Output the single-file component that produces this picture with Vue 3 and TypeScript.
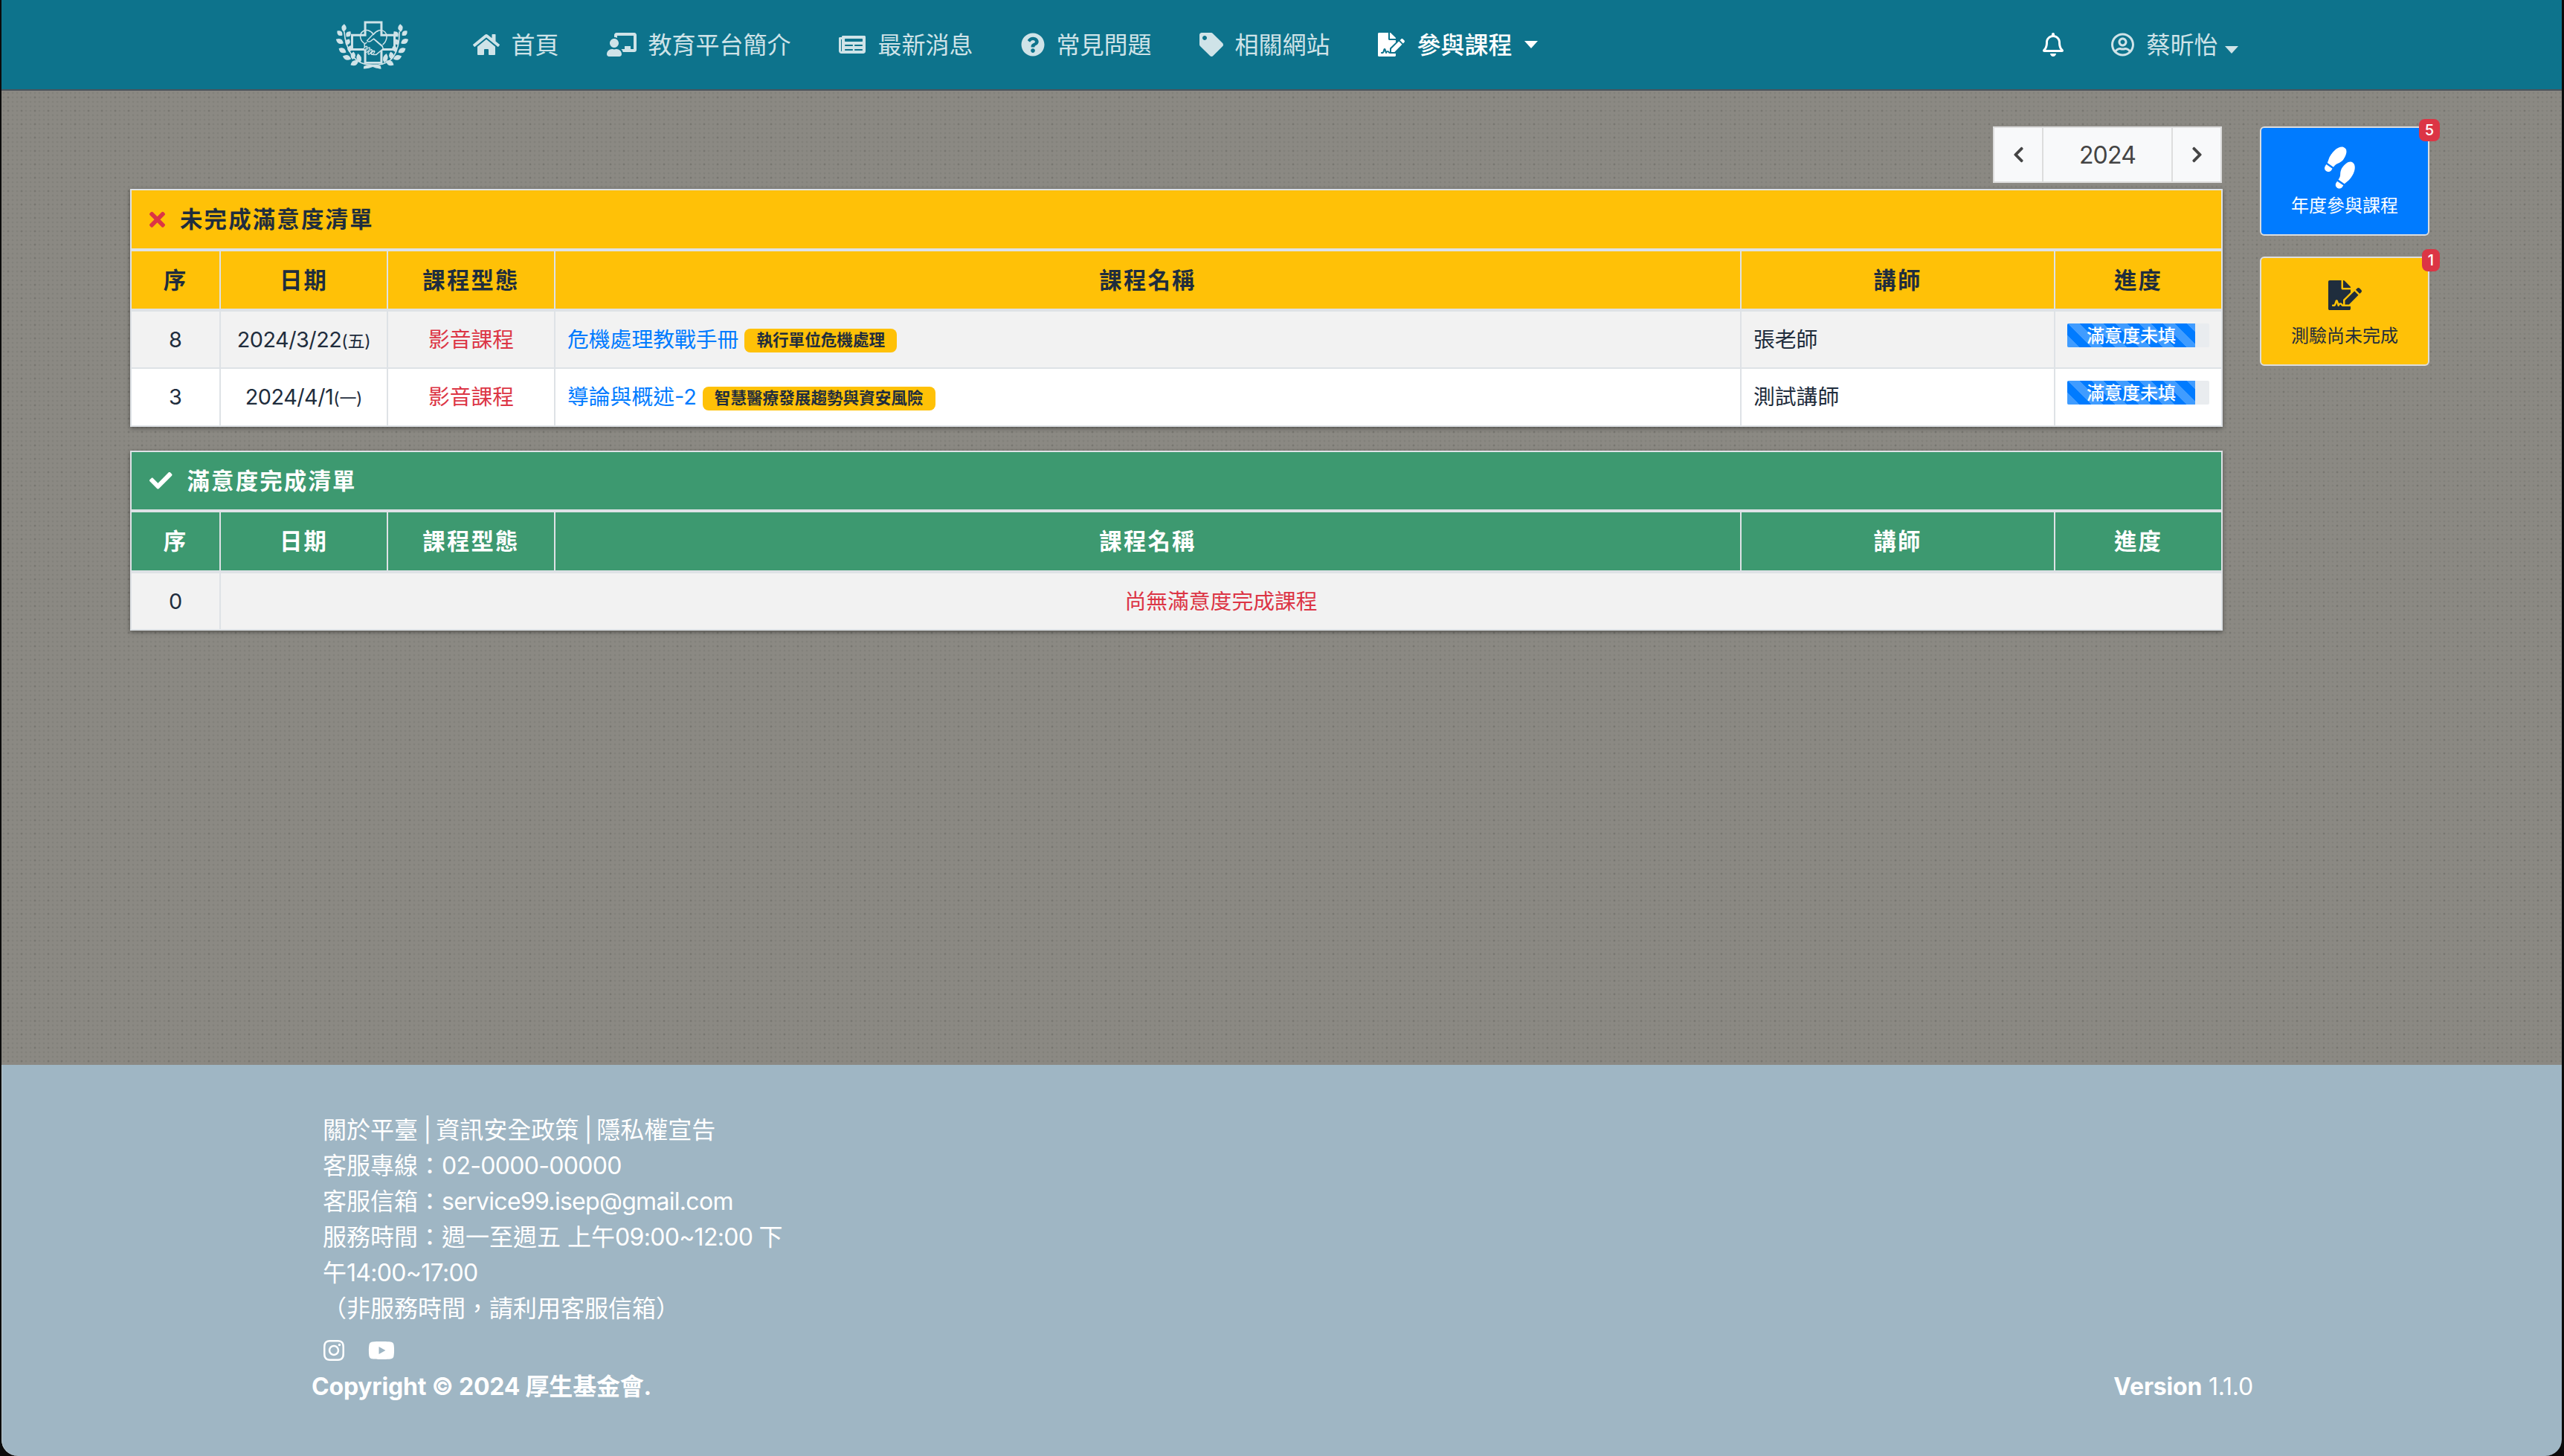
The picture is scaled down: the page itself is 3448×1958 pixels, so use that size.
<script setup lang="ts">
interface Icon { w: number; d: string }
interface NavItem { key: string; icon: Icon; label: string; gap: number; next: number; active?: boolean }
interface Course { no: number; date: string; day: string; kind: string; title: string; tag: string; teacher: string; status: string; percent: number }

const icons: Record<string, Icon> = {
  home: { w: 576, d: 'M280.37 148.26L96 300.11V464a16 16 0 0 0 16 16l112.06-.29a16 16 0 0 0 15.92-16V368a16 16 0 0 1 16-16h64a16 16 0 0 1 16 16v95.64a16 16 0 0 0 16 16.05L464 480a16 16 0 0 0 16-16V300L295.67 148.26a12.19 12.19 0 0 0-15.3 0zM571.6 251.47L488 182.56V44.05a12 12 0 0 0-12-12h-56a12 12 0 0 0-12 12v72.61L318.47 43a48 48 0 0 0-61 0L4.34 251.47a12 12 0 0 0-1.6 16.9l25.5 31A12 12 0 0 0 45.15 301l235.22-193.74a12.19 12.19 0 0 1 15.3 0L530.9 301a12 12 0 0 0 16.9-1.6l25.5-31a12 12 0 0 0-1.7-16.93z' },
  teacher: { w: 640, d: 'M208 352c-2.39 0-4.78.35-7.06 1.09C187.98 357.3 174.35 360 160 360c-14.35 0-27.98-2.7-40.95-6.91-2.28-.74-4.66-1.09-7.05-1.09C49.94 352-.33 402.48 0 464.62.14 490.88 21.73 512 48 512h224c26.27 0 47.86-21.12 48-47.38.33-62.14-49.94-112.62-112-112.62zm-48-32c53.02 0 96-42.98 96-96s-42.98-96-96-96-96 42.98-96 96 42.98 96 96 96zM592 0H208c-26.47 0-48 22.25-48 49.59V96c23.42 0 45.1 6.78 64 17.8V64h352v288h-64v-64H384v64h-76.24c19.1 16.69 33.12 38.73 39.69 64H592c26.47 0 48-22.25 48-49.59V49.59C640 22.25 618.47 0 592 0z' },
  news: { w: 576, d: 'M552 64H88c-13.255 0-24 10.745-24 24v8H24c-13.255 0-24 10.745-24 24v272c0 30.928 25.072 56 56 56h472c26.51 0 48-21.49 48-48V88c0-13.255-10.745-24-24-24zM56 400a8 8 0 0 1-8-8V144h16v248a8 8 0 0 1-8 8zm236-16H140c-6.627 0-12-5.373-12-12v-8c0-6.627 5.373-12 12-12h152c6.627 0 12 5.373 12 12v8c0 6.627-5.373 12-12 12zm208 0H348c-6.627 0-12-5.373-12-12v-8c0-6.627 5.373-12 12-12h152c6.627 0 12 5.373 12 12v8c0 6.627-5.373 12-12 12zm-208-96H140c-6.627 0-12-5.373-12-12v-8c0-6.627 5.373-12 12-12h152c6.627 0 12 5.373 12 12v8c0 6.627-5.373 12-12 12zm208 0H348c-6.627 0-12-5.373-12-12v-8c0-6.627 5.373-12 12-12h152c6.627 0 12 5.373 12 12v8c0 6.627-5.373 12-12 12zm0-96H140c-6.627 0-12-5.373-12-12v-40c0-6.627 5.373-12 12-12h360c6.627 0 12 5.373 12 12v40c0 6.627-5.373 12-12 12z' },
  question: { w: 512, d: 'M504 256c0 136.997-111.043 248-248 248S8 392.997 8 256C8 119.083 119.043 8 256 8s248 111.083 248 248zM262.655 90c-54.497 0-89.255 22.957-116.549 63.758-3.536 5.286-2.353 12.415 2.715 16.258l34.699 26.31c5.205 3.947 12.621 3.008 16.665-2.122 17.864-22.658 30.113-35.797 57.303-35.797 20.429 0 45.698 13.148 45.698 32.958 0 14.976-12.363 22.667-32.534 33.976C247.128 238.528 216 254.941 216 296v4c0 6.627 5.373 12 12 12h56c6.627 0 12-5.373 12-12v-1.333c0-28.462 83.186-29.647 83.186-106.667 0-58.002-60.165-102-116.531-102zM256 338c-25.365 0-46 20.635-46 46 0 25.364 20.635 46 46 46s46-20.636 46-46c0-25.365-20.635-46-46-46z' },
  tag: { w: 512, d: 'M0 252.118V48C0 21.49 21.49 0 48 0h204.118a48 48 0 0 1 33.941 14.059l211.882 211.882c18.745 18.745 18.745 49.137 0 67.882L293.823 497.941c-18.745 18.745-49.137 18.745-67.882 0L14.059 286.059A48 48 0 0 1 0 252.118zM112 64c-26.51 0-48 21.49-48 48s21.49 48 48 48 48-21.49 48-48-21.49-48-48-48z' },
  sign: { w: 576, d: 'M218.17 424.14c-2.95-5.92-8.09-6.52-10.17-6.52s-7.22.59-10.02 6.19l-7.67 15.34c-6.37 12.78-25.03 11.37-29.48-2.09L144 386.59l-10.61 31.88c-5.89 17.66-22.38 29.53-41 29.53H80c-8.84 0-16-7.16-16-16s7.16-16 16-16h12.39c4.83 0 9.11-3.08 10.64-7.66l18.19-54.64c3.3-9.81 12.44-16.41 22.78-16.41s19.48 6.59 22.77 16.41l13.88 41.64c19.75-16.19 54.06-9.7 66 14.16 1.89 3.78 5.49 5.95 9.36 6.26v-82.12l128-127.09V160H248c-13.2 0-24-10.8-24-24V0H24C10.7 0 0 10.7 0 24v464c0 13.3 10.7 24 24 24h336c13.3 0 24-10.7 24-24v-40l-128-.11c-16.12-.31-30.58-9.28-37.83-23.75zM384 121.9c0-6.3-2.5-12.4-7-16.9L279.1 7c-4.5-4.5-10.6-7-17-7H256v128h128v-6.1zm-96 225.06V416h68.99l161.68-162.78-67.88-67.88L288 346.96zm280.54-179.63l-31.87-31.87c-9.94-9.94-26.07-9.94-36.01 0l-27.25 27.25 67.88 67.88 27.25-27.25c9.95-9.94 9.95-26.07 0-36.01z' },
  bell: { w: 448, d: 'M439.39 362.29c-19.32-20.76-55.47-51.99-55.47-154.29 0-77.7-54.48-139.9-127.94-155.16V32c0-17.67-14.32-32-31.98-32s-31.98 14.33-31.98 32v20.84C118.56 68.1 64.08 130.3 64.08 208c0 102.3-36.15 133.53-55.47 154.29-6 6.45-8.66 14.16-8.61 21.71.11 16.4 12.98 32 32.1 32h383.8c19.12 0 32-15.6 32.1-32 .05-7.55-2.61-15.27-8.61-21.71zM67.53 368c21.22-27.97 44.42-74.33 44.53-159.42 0-.2-.06-.38-.06-.58 0-61.86 50.14-112 112-112s112 50.14 112 112c0 .2-.06.38-.06.58.11 85.1 23.31 131.46 44.53 159.42H67.53zM224 512c35.32 0 63.97-28.65 63.97-64H160.03c0 35.35 28.65 64 63.97 64z' },
  user: { w: 496, d: 'M248 104c-53 0-96 43-96 96s43 96 96 96 96-43 96-96-43-96-96-96zm0 144c-26.5 0-48-21.5-48-48s21.5-48 48-48 48 21.5 48 48-21.5 48-48 48zm0-240C111 8 0 119 0 256s111 248 248 248 248-111 248-248S385 8 248 8zm0 448c-49.7 0-95.1-18.3-130.1-48.4 14.9-23 40.4-38.6 69.6-39.5 20.8 6.4 40.6 9.6 60.5 9.6s39.7-3.1 60.5-9.6c29.2 1 54.7 16.5 69.6 39.5-35 30.1-80.4 48.4-130.1 48.4zm162.7-84.1c-24.4-31.4-62.1-51.9-105.1-51.9-10.2 0-26 9.6-57.6 9.6-31.5 0-47.4-9.6-57.6-9.6-42.9 0-80.6 20.5-105.1 51.9C61.9 339.2 48 299.2 48 256c0-110.3 89.7-200 200-200s200 89.7 200 200c0 43.2-13.9 83.2-37.3 115.9z' },
  times: { w: 352, d: 'M242.72 256l100.07-100.07c12.28-12.28 12.28-32.19 0-44.48l-22.24-22.24c-12.28-12.28-32.19-12.28-44.48 0L176 189.28 75.93 89.21c-12.28-12.28-32.19-12.28-44.48 0L9.21 111.45c-12.28 12.28-12.28 32.19 0 44.48L109.28 256 9.21 356.07c-12.28 12.28-12.28 32.19 0 44.48l22.24 22.24c12.28 12.28 32.2 12.28 44.48 0L176 322.72l100.07 100.07c12.28 12.28 32.2 12.28 44.48 0l22.24-22.24c12.28-12.28 12.28-32.19 0-44.48L242.72 256z' },
  check: { w: 512, d: 'M173.898 439.404l-166.4-166.4c-9.997-9.997-9.997-26.206 0-36.204l36.203-36.204c9.997-9.998 26.207-9.998 36.204 0L192 312.69 432.095 72.596c9.997-9.997 26.207-9.997 36.204 0l36.203 36.204c9.997 9.997 9.997 26.206 0 36.204l-294.4 294.401c-9.998 9.997-26.207 9.997-36.204-.001z' },
  left: { w: 320, d: 'M34.52 239.03L228.87 44.69c9.37-9.37 24.57-9.37 33.94 0l22.67 22.67c9.36 9.36 9.37 24.52.04 33.9L131.49 256l154.02 154.75c9.34 9.38 9.32 24.54-.04 33.9l-22.67 22.67c-9.37 9.37-24.57 9.37-33.94 0L34.52 272.97c-9.37-9.37-9.37-24.57 0-33.94z' },
  shoe: { w: 640, d: 'M192 160h32V32h-32c-35.35 0-64 28.65-64 64s28.65 64 64 64zM0 416c0 35.35 28.65 64 64 64h32V352H64c-35.35 0-64 28.65-64 64zm337.46-128c-34.91 0-76.16 13.12-104.73 32-24.79 16.38-44.52 32-104.73 32v128l57.53 15.97c26.21 7.28 53.01 13.12 80.31 15.05 32.69 2.31 65.6.67 97.58-6.2C472.9 481.3 512 429.22 512 384c0-64-84.18-96-174.54-96zM491.42 7.25C459.44.38 426.53-1.26 393.84 1.05c-27.3 1.93-54.1 7.77-80.31 15.04L256 32v128c60.2 0 79.94 15.62 104.73 32 28.57 18.88 69.82 32 104.73 32C555.82 224 640 192 640 128c0-45.22-39.1-97.3-148.58-120.75z' },
  instagram: { w: 448, d: 'M224.1 141c-63.6 0-114.9 51.3-114.9 114.9s51.3 114.9 114.9 114.9S339 319.5 339 255.9 287.7 141 224.1 141zm0 189.6c-41.1 0-74.7-33.5-74.7-74.7s33.5-74.7 74.7-74.7 74.7 33.5 74.7 74.7-33.6 74.7-74.7 74.7zm146.4-194.3c0 14.9-12 26.8-26.8 26.8-14.9 0-26.8-12-26.8-26.8s12-26.8 26.8-26.8 26.8 12 26.8 26.8zm76.1 27.2c-1.7-35.9-9.9-67.7-36.2-93.9-26.2-26.2-58-34.4-93.9-36.2-37-2.1-147.9-2.1-184.9 0-35.8 1.7-67.6 9.9-93.9 36.1s-34.4 58-36.2 93.9c-2.1 37-2.1 147.9 0 184.9 1.7 35.9 9.9 67.7 36.2 93.9s58 34.4 93.9 36.2c37 2.1 147.9 2.1 184.9 0 35.9-1.7 67.7-9.9 93.9-36.2 26.2-26.2 34.4-58 36.2-93.9 2.1-37 2.1-147.8 0-184.8zM398.8 388c-7.8 19.6-22.9 34.7-42.6 42.6-29.5 11.7-99.5 9-132.1 9s-102.7 2.6-132.1-9c-19.6-7.8-34.7-22.9-42.6-42.6-11.7-29.5-9-99.5-9-132.1s-2.6-102.7 9-132.1c7.8-19.6 22.9-34.7 42.6-42.6 29.5-11.7 99.5-9 132.1-9s102.7-2.6 132.1 9c19.6 7.8 34.7 22.9 42.6 42.6 11.7 29.5 9 99.5 9 132.1s2.7 102.7-9 132.1z' },
  youtube: { w: 576, d: 'M549.655 124.083c-6.281-23.65-24.787-42.276-48.284-48.597C458.781 64 288 64 288 64S117.22 64 74.629 75.486c-23.497 6.322-42.003 24.947-48.284 48.597-11.412 42.867-11.412 132.305-11.412 132.305s0 89.438 11.412 132.305c6.281 23.65 24.787 41.5 48.284 47.821C117.22 448 288 448 288 448s170.78 0 213.371-11.486c23.497-6.321 42.003-24.171 48.284-47.821 11.412-42.867 11.412-132.305 11.412-132.305s0-89.438-11.412-132.305zm-317.51 213.508V175.185l142.739 81.205-142.739 81.201z' },
}

const nav: NavItem[] = [
  { key: 'home', icon: icons.home, label: '首頁', gap: 14, next: 64 },
  { key: 'about', icon: icons.teacher, label: '教育平台簡介', gap: 16, next: 62 },
  { key: 'news', icon: icons.news, label: '最新消息', gap: 15, next: 60 },
  { key: 'faq', icon: icons.question, label: '常見問題', gap: 12, next: 60 },
  { key: 'links', icon: icons.tag, label: '相關網站', gap: 12, next: 62 },
  { key: 'courses', icon: icons.sign, label: '參與課程', gap: 15, next: 0, active: true },
]

const heads: string[] = ['序', '日期', '課程型態', '課程名稱', '講師', '進度']

const pending: Course[] = [
  { no: 8, date: '2024/3/22', day: '(五)', kind: '影音課程', title: '危機處理教戰手冊', tag: '執行單位危機處理', teacher: '張老師', status: '滿意度未填', percent: 90 },
  { no: 3, date: '2024/4/1', day: '(一)', kind: '影音課程', title: '導論與概述-2', tag: '智慧醫療發展趨勢與資安風險', teacher: '測試講師', status: '滿意度未填', percent: 90 },
]

// One side of the laurel wreath: x, y, rotation, half length
const leaves: number[][] = [
  [67, 68, 4, 16], [50, 89, -48, 14], [85, 93, 38, 14],
  [50, 122, -62, 17], [82, 125, 30, 14], [61, 159, -62, 17], [91, 152, 14, 14],
  [79, 188, -72, 18], [104, 180, 8, 16], [110, 210, -118, 18], [128, 190, -14, 19],
]
</script>

<template>
  <div class="screen">
    <div class="window">
      <header class="navbar">
        <svg class="logo" viewBox="36 36 294 202">
          <g fill="none" stroke="currentColor">
            <path stroke-width="9" d="M153 45H219V97H272V155H219V209H153V155H100V97H153Z" />
            <g stroke-width="4.5">
              <path d="M152 132C133 122 127 95 142 83C155 72 173 76 187 94C200 76 221 72 233 84C246 97 241 122 224 136" />
              <path fill="#0d738c" d="M187 92L161 119C165 126 174 125 181 117L188 112L222 140L226 152L198 176L186 176L152 158L150 134L160 126" />
              <path d="M188 113L222 143" />
            </g>
            <path stroke-width="11" stroke-linecap="round" d="M158 146L150 153M169 151L158 163M178 159L168 171M188 164L181 172" />
            <path stroke="#0d738c" stroke-width="4" stroke-linecap="round" d="M157 147L151 152M168 152L159 162M177 160L169 170M187 166L182 171" />
            <path stroke-width="5" d="M187 218C225 219 252 207 268 184C284 160 292 118 292 82M187 218C149 219 122 207 104 184C84 160 70 118 68 82" />
          </g>
          <g fill="currentColor">
            <path v-for="(l, i) in leaves" :key="'l' + i" :transform="`translate(${l[0]} ${l[1]}) rotate(${l[2]})`" :d="`M0 ${-l[3]}Q20 0 0 ${l[3]}Q-20 0 0 ${-l[3]}Z`" />
            <g transform="translate(363 0) scale(-1 1)">
              <path v-for="(l, i) in leaves" :key="'r' + i" :transform="`translate(${l[0]} ${l[1]}) rotate(${l[2]})`" :d="`M0 ${-l[3]}Q20 0 0 ${l[3]}Q-20 0 0 ${-l[3]}Z`" />
            </g>
            <path d="M148 222Q168 216 187 220Q206 216 216 222L218 234Q198 232 184 226Q166 234 146 233Z" />
          </g>
        </svg>
        <nav class="menu">
          <a v-for="n in nav" :key="n.key" class="item" :class="{ active: n.active }" :style="{ marginRight: n.next + 'px' }">
            <span class="fw" :style="{ marginRight: n.gap + 'px' }"><svg :viewBox="`0 0 ${n.icon.w} 512`" :width="n.icon.w / 16" height="32"><path fill="currentColor" :d="n.icon.d" /></svg></span>
            <span class="label">{{ n.label }}</span>
            <i v-if="n.active" class="caret"></i>
          </a>
        </nav>
        <div class="account">
          <svg class="bell" viewBox="0 0 448 512" width="28" height="32"><path fill="currentColor" :d="icons.bell.d" /></svg>
          <svg viewBox="0 0 496 512" width="31" height="32"><path fill="currentColor" :d="icons.user.d" /></svg>
          <span class="name label">蔡昕怡</span>
          <i class="caret low"></i>
        </div>
      </header>

      <main class="main">
        <div class="content">
          <div class="years">
            <button class="step"><svg viewBox="0 0 320 512" width="15" height="24"><path fill="currentColor" :d="icons.left.d" /></svg></button>
            <span class="year">2024</span>
            <button class="step"><svg class="flip" viewBox="0 0 320 512" width="15" height="24"><path fill="currentColor" :d="icons.left.d" /></svg></button>
          </div>

          <section class="table yellow">
            <h2 class="title">
              <svg class="red" viewBox="0 0 352 512" width="21" height="30.5"><path fill="currentColor" :d="icons.times.d" /></svg>
              <span>未完成滿意度清單</span>
            </h2>
            <div class="row head"><div v-for="h in heads" :key="h" class="cell">{{ h }}</div></div>
            <div v-for="(c, i) in pending" :key="c.no" class="row body" :class="{ odd: i % 2 === 0 }">
              <div class="cell">{{ c.no }}</div>
              <div class="cell"><span class="date">{{ c.date }}</span><span class="day">{{ c.day }}</span></div>
              <div class="cell red">{{ c.kind }}</div>
              <div class="cell start"><a class="link">{{ c.title }}</a><span class="tag">{{ c.tag }}</span></div>
              <div class="cell start">{{ c.teacher }}</div>
              <div class="cell prog"><div class="track"><div class="bar" :style="{ width: c.percent + '%' }">{{ c.status }}</div></div></div>
            </div>
          </section>

          <section class="table green">
            <h2 class="title">
              <svg viewBox="0 0 512 512" width="30.5" height="30.5"><path fill="currentColor" :d="icons.check.d" /></svg>
              <span>滿意度完成清單</span>
            </h2>
            <div class="row head"><div v-for="h in heads" :key="h" class="cell">{{ h }}</div></div>
            <div class="row body odd">
              <div class="cell">0</div>
              <div class="cell wide red">尚無滿意度完成課程</div>
            </div>
          </section>
        </div>

        <aside class="side">
          <a class="card blue">
            <svg class="shoe" viewBox="0 0 640 512" width="50" height="40"><path fill="currentColor" :d="icons.shoe.d" /></svg>
            <span>年度參與課程</span>
            <b class="count">5</b>
          </a>
          <a class="card amber">
            <svg viewBox="0 0 576 512" width="45" height="40"><path fill="currentColor" :d="icons.sign.d" /></svg>
            <span>測驗尚未完成</span>
            <b class="count">1</b>
          </a>
        </aside>
      </main>

      <footer class="footer">
        <div class="info">
          <p>關於平臺<span class="bar-sep"> | </span>資訊安全政策<span class="bar-sep"> | </span>隱私權宣告</p>
          <p>客服專線：<span class="latin">02-0000-00000</span></p>
          <p>客服信箱：<span class="latin">service99.isep@gmail.com</span></p>
          <p>服務時間：週一至週五 上午<span class="latin">09:00~12:00 </span>下</p>
          <p>午<span class="latin">14:00~17:00</span></p>
          <p>（非服務時間，請利用客服信箱）</p>
          <div class="social">
            <svg viewBox="0 0 448 512" width="28" height="32"><path fill="currentColor" :d="icons.instagram.d" /></svg>
            <svg viewBox="0 0 576 512" width="36" height="32"><path fill="currentColor" :d="icons.youtube.d" /></svg>
          </div>
        </div>
        <div class="legal">
          <strong>Copyright © 2024 厚生基金會.</strong>
          <span class="version"><b>Version</b> 1.1.0</span>
        </div>
      </footer>
    </div>
  </div>
</template>

<style>
body { background: #0b0b0b; }
</style>

<style scoped>
* { box-sizing: border-box; }
.screen {
  width: 3448px;
  height: 1958px;
  background: #0b0b0b;
  padding: 0 3px 0 2px;
  overflow: hidden;
  font-family: Inter, "Noto Sans CJK TC", sans-serif;
  font-size: 32px;
  line-height: 48px;
  color: #1f2d3d;
}
svg { display: block; flex: none; }
.window {
  display: flex;
  flex-direction: column;
  height: 1958px;
  border-radius: 0 0 22px 22px;
  overflow: hidden;
  background: #9fb6c4;
  box-shadow: inset 1px 0 #b7c5cc;
}
.navbar {
  display: flex;
  align-items: center;
  flex: none;
  height: 122px;
  padding-left: 450px;
  background: #0d738c;
  border-bottom: 2px solid #4b545c;
  color: #cfe3e8;
}
.logo { width: 98px; height: 67px; margin-right: 83.5px; }
.menu { display: flex; align-items: center; }
.item { display: flex; align-items: center; white-space: nowrap; }
.item.active { color: #fff; font-weight: 500; }
.label { padding-top: 2px; }
.fw { display: flex; justify-content: center; width: 40px; }
.caret {
  border: solid transparent;
  border-width: 10px 9px 0;
  border-top-color: currentColor;
  margin-left: 16px;
}
.account { display: flex; align-items: center; margin-left: 679px; }
.bell { color: #fff; margin-right: 64px; }
.name { margin-left: 17px; }
.low { margin: 14px 0 0 9px; }

.main {
  display: flex;
  align-items: flex-start;
  flex: none;
  height: 1310px;
  padding: 48px 0 0 173px;
  background-color: #8b8983;
  background-image:
    radial-gradient(circle, rgba(50, 50, 48, .22) 0, rgba(50, 50, 48, 0) 2px),
    radial-gradient(circle, rgba(50, 50, 48, .15) 0, rgba(50, 50, 48, 0) 1.8px);
  background-size: 18px 18px, 6px 6px;
}
.content { display: flex; flex-direction: column; width: 2814px; }
.years {
  display: flex;
  align-self: flex-end;
  width: 308px;
  height: 76px;
  margin: 0 1px 8px 0;
  background: #f8f9fa;
  border: 2px solid #ddd;
  color: #444;
}
.step {
  display: flex;
  align-items: center;
  justify-content: center;
  width: 64px;
  padding: 0;
  border: 0;
  background: none;
  color: #444;
}
.flip { transform: scaleX(-1); }
.year {
  flex: 1;
  border: solid #ddd;
  border-width: 0 2px;
  line-height: 74px;
  text-align: center;
  letter-spacing: -.8px;
}
.table {
  background: #dee2e6;
  border: 2px solid #dee2e6;
  font-size: 28.8px;
  box-shadow: 0 2px 6px rgba(0, 0, 0, .4);
}
.green { margin-top: 32px; }
.title {
  display: flex;
  align-items: center;
  height: 78px;
  margin: 0;
  padding-left: 24px;
  font-size: 30.4px;
  font-weight: 700;
  letter-spacing: 2.2px;
}
.title svg { margin-right: 20px; }
.yellow .title, .yellow .head .cell { background: #ffc107; }
.green .title, .green .head .cell { background: #3d9970; color: #fff; }
.green .title { height: 77px; }
.row {
  display: grid;
  grid-template-columns: 118px 223px 223px 1593px 420px 223px;
  column-gap: 2px;
}
.head { height: 77px; margin: 4px 0; font-size: 30.4px; font-weight: 700; letter-spacing: 2.2px; }
.green .head { height: 78px; }
.body { height: 75px; }
.body + .body { height: 76px; margin-top: 2px; }
.cell {
  display: flex;
  align-items: center;
  justify-content: center;
  background: #fff;
  white-space: nowrap;
}
.odd .cell { background: #f2f2f2; }
.cell.wide { grid-column: 2 / -1; }
.cell.start { justify-content: flex-start; padding-left: 16px; }
.red { color: #dc3545; }
.date { letter-spacing: -.5px; }
.day { font-size: 23px; padding-top: 4px; letter-spacing: -.3px; }
.link { color: #007bff; }
.tag {
  margin: 3px 0 0 8px;
  height: 32px;
  padding: 0 16px;
  border-radius: 8px;
  background: #ffc107;
  font-size: 21.6px;
  font-weight: 700;
  line-height: 31px;
}
.cell.prog { align-items: flex-start; padding: 16px 16px 0; }
.track { width: 191px; height: 32px; border-radius: 2px; background: #e9ecef; overflow: hidden; }
.bar {
  height: 32px;
  background: #007bff linear-gradient(45deg, rgba(255, 255, 255, .25) 25%, transparent 25%, transparent 50%, rgba(255, 255, 255, .25) 50%, rgba(255, 255, 255, .25) 75%, transparent 75%, transparent) 0 0 / 32px 32px;
  color: #fff;
  font-size: 24px;
  font-weight: 500;
  line-height: 34px;
  text-align: center;
}
.side { display: flex; flex-direction: column; gap: 28px; margin-left: 50px; }
.card {
  position: relative;
  display: flex;
  flex-direction: column;
  align-items: center;
  width: 228px;
  height: 147px;
  padding-top: 33px;
  border: 2px solid #ddd;
  border-radius: 6px;
  font-size: 24px;
  line-height: 36px;
}
.card span { margin-top: 14px; }
.blue { background: #007bff; color: #fff; }
.amber { background: #ffc107; padding-top: 30px; }
.amber span { margin-top: 17px; }
.shoe { transform: translateX(-6px) rotate(-55deg); }
.count {
  position: absolute;
  top: -12px;
  right: -16px;
  height: 30px;
  padding: 0 8px;
  border-radius: 8px;
  background: #dc3545;
  color: #fff;
  font-size: 20px;
  font-weight: 500;
  line-height: 30px;
}

.footer { flex: 1; padding-top: 64px; color: #fff; }
.info { padding-left: 432px; }
.info p { margin: 0; height: 48px; white-space: pre; }
.latin { letter-spacing: -.7px; }
.bar-sep { letter-spacing: -1.5px; }
.social { display: flex; align-items: center; gap: 32px; margin: 16px 0 0 1px; }
.legal { display: flex; justify-content: space-between; padding: 9px 415px 0 417px; }
.legal b, .legal strong { font-weight: 700; }
.legal strong { letter-spacing: -.2px; }
.version { letter-spacing: -.2px; }
</style>
